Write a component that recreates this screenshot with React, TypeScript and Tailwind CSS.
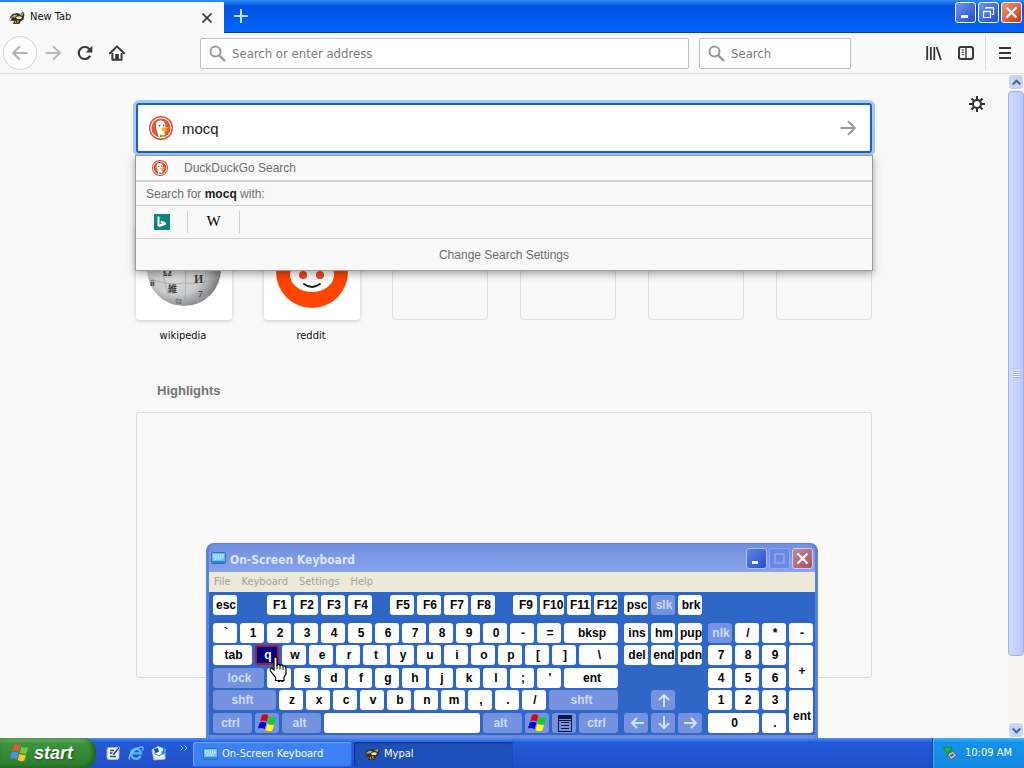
import { useState } from 'react';
import type { ReactNode } from 'react';
import clsx from 'clsx';

const UI = "font-['DejaVu_Sans_Condensed','Noto_Sans',sans-serif]";

/* ---------- Icons ---------- */

function MypalIcon() {
  return (
    <svg width="16" height="16" viewBox="0 0 16 16" className="shrink-0">
      <path d="M0.5 7.5 L3.5 4 L8 3 L11.5 4 L14 1.5 L15.5 4.5 L14.5 9.5 L11.5 11.5 L10.5 14 L4 14 L5 11 L1 10.5 L3 8.8Z" fill="#3a2f20" />
      <path d="M1.5 7.5 L5 4.8 L8.5 5 L6 7.5Z M10.5 4.4 L14.4 2.8 L13.5 6Z" fill="#b5a878" />
      <path d="M7 7.2 Q10 5.2 13 7 L12 9 L8 9Z" fill="#f1e9cf" />
      <path d="M5.5 11 L9.5 10 L9.5 13 L6 13.2Z" fill="#b8924a" />
      <path d="M7 10 L8 13" stroke="#2b2218" />
    </svg>
  );
}

function WindowsFlag({ size = 20, bright = false }: { size?: number; bright?: boolean }) {
  return (
    <svg width={size} height={size} viewBox="0 0 20 20" className="shrink-0">
      <g transform="rotate(8 10 10)">
        <path d="M3 3 Q6 0.8 9.4 2.6 L8.6 9 Q5.4 7.4 2 9.3Z" fill={bright ? '#e00000' : '#e8582c'} />
        <path d="M10.4 3.3 Q13.6 5 17.4 3.2 L16.4 9.6 Q13 11.2 9.7 9.6Z" fill={bright ? '#00d818' : '#7fc241'} />
        <path d="M1.8 10.6 Q5 8.6 8.4 10.2 L7.5 16.6 Q4.4 15.2 0.8 17Z" fill={bright ? '#0000d8' : '#4c8ff0'} />
        <path d="M9.5 10.9 Q12.6 12.4 16.2 10.8 L15.3 17.2 Q12 18.8 8.6 17.2Z" fill={bright ? '#ffff00' : '#fbc72c'} />
      </g>
    </svg>
  );
}

function DuckIcon({ size }: { size: number }) {
  return (
    <svg width={size} height={size} viewBox="0 0 24 24" className="shrink-0">
      <circle cx="12" cy="12" r="12" fill="#d9492f" />
      <circle cx="12" cy="12" r="10.6" fill="#fff" />
      <circle cx="12" cy="12" r="9.6" fill="#de5833" />
      <path d="M9.8 21.3 C9 17 7 13.5 6.8 9.5 C6.8 6.5 8.4 5 10.6 4.6 C14.6 4.3 16.6 6.8 16.4 10.5 L15.4 15 L16 21 Q13 22 9.8 21.3Z" fill="#fff" />
      <path d="M12.5 12 Q16 10.2 20 11.6 Q18 13 15 13.2 Q18 14 19 14.4 Q15.5 16.4 12.7 14.8Z" fill="#f9b51b" />
      <path d="M11 18.5 L14 19.4 L17 18 L17 21 L14 20.6 L11 21.4Z" fill="#5aad45" />
      <circle cx="10.4" cy="9.6" r="0.9" fill="#2d4f8e" />
      <circle cx="14.7" cy="9.2" r="0.8" fill="#2d4f8e" />
    </svg>
  );
}

function Magnifier() {
  return (
    <svg width="17" height="17" viewBox="0 0 17 17" fill="none" stroke="#98989a" strokeWidth="2" className="shrink-0">
      <circle cx="6.5" cy="6.5" r="5" />
      <path d="M10.3 10.3 L16 16" strokeWidth="2.4" />
    </svg>
  );
}

function ArrowIcon({ flip = false, className }: { flip?: boolean; className?: string }) {
  return (
    <svg width="16" height="16" viewBox="0 0 16 16" fill="none" stroke="currentColor" strokeWidth="2" className={className}>
      {flip ? <path d="M15.5 8 H1.5 M8 1.2 L1.2 8 L8 14.8" /> : <path d="M0.5 8 H14.5 M8 1.2 L14.8 8 L8 14.8" />}
    </svg>
  );
}

function ReloadIcon() {
  return (
    <svg width="16" height="16" viewBox="0 0 16 16">
      <path d="M13.1 10.8 A6 6 0 1 1 12.6 4.4" fill="none" stroke="#38383a" strokeWidth="2.2" />
      <path d="M15.4 0.8 V7.4 H8.8Z" fill="#38383a" />
    </svg>
  );
}

function HomeIcon() {
  return (
    <svg width="16" height="16" viewBox="0 0 16 16">
      <path d="M1 8.3 L8 1.4 L15 8.3" fill="none" stroke="#38383a" strokeWidth="2" strokeLinecap="round" strokeLinejoin="round" />
      <path d="M3.4 8 V14.8 H12.6 V8" fill="none" stroke="#38383a" strokeWidth="2" strokeLinejoin="round" />
      <path d="M6.2 15 V9 H9.8 V15Z" fill="#38383a" />
    </svg>
  );
}

function GearIcon() {
  return (
    <svg width="16" height="16" viewBox="0 0 16 16" fill="none" stroke="#2f2f31" strokeWidth="2">
      <circle cx="8" cy="8" r="4" />
      <path d="M8 0 V4 M8 12 V16 M0 8 H4 M12 8 H16 M2.5 2.5 L5.2 5.2 M10.8 10.8 L13.5 13.5 M13.5 2.5 L10.8 5.2 M5.2 10.8 L2.5 13.5" />
    </svg>
  );
}

function KeyboardIcon() {
  return (
    <svg width="15" height="12" viewBox="0 0 15 12" className="shrink-0">
      <rect x="0.5" y="0.5" width="14" height="11" rx="1" fill="#2f88cc" stroke="#2a6fb8" />
      <rect x="1" y="1" width="13" height="8" fill="#6cc0ee" />
      <path d="M2 3 H13 M2 5 H13 M3.5 7 H11.5" stroke="#fff" strokeDasharray="1.5 0.8" />
    </svg>
  );
}

function WikipediaGlobe() {
  return (
    <svg viewBox="0 0 96 96" className="size-full">
      <defs>
        <radialGradient id="globe" cx="40%" cy="45%" r="62%">
          <stop offset="0" stopColor="#e6e6e6" />
          <stop offset="0.65" stopColor="#c9cacb" />
          <stop offset="1" stopColor="#77797b" />
        </radialGradient>
      </defs>
      <circle cx="48" cy="45" r="37" fill="url(#globe)" />
      <path
        d="M13 54 Q30 62 48 59 Q66 61 83 53 M25 74 Q40 79 55 76 Q65 76 72 71 M27 45 Q28 62 36 80 M49 45 Q51 60 48 82 M70 45 Q70 62 61 79"
        fill="none"
        stroke="#a4a6a8"
        strokeWidth="0.8"
      />
      <g fill="#3c3c3c" fontFamily="Liberation Serif, serif" fontWeight="bold">
        <text x="27" y="52" fontSize="11">Ω</text>
        <text x="58" y="59" fontSize="12">И</text>
        <text x="32" y="68" fontSize="9" fontFamily="Noto Sans CJK JP, sans-serif">維</text>
        <text x="62" y="73" fontSize="9">7</text>
        <text x="14" y="62" fontSize="8">й</text>
      </g>
      <path d="M39 76 H46 M40 79 H46 M41 74 V79 M44 75 V80" stroke="#6a6a6a" strokeWidth="0.8" />
    </svg>
  );
}

function RedditFace() {
  return (
    <svg viewBox="0 0 96 96" className="size-full">
      <circle cx="48" cy="48" r="36" fill="#ff4500" />
      <circle cx="26" cy="41" r="6" fill="#fff" />
      <circle cx="70" cy="41" r="6" fill="#fff" />
      <ellipse cx="48" cy="51" rx="22" ry="17" fill="#fff" />
      <circle cx="39" cy="51" r="4" fill="#f0442a" />
      <circle cx="56" cy="51" r="4" fill="#f0442a" />
      <path d="M40 60 Q48 66 56 60" fill="none" stroke="#161616" strokeWidth="1.8" strokeLinecap="round" />
    </svg>
  );
}

/* ---------- Browser ---------- */

function CaptionButton({ label, className, children }: { label: string; className: string; children: ReactNode }) {
  return (
    <button aria-label={label} className={clsx('flex size-[21px] items-center justify-center rounded-[3px] border', className)}>
      <svg width="17" height="17" viewBox="0 0 17 17" fill="none" stroke="#fff" strokeWidth="2">{children}</svg>
    </button>
  );
}

const BLUE_CAPTION = 'border-white bg-linear-to-br from-[#6f93f0] to-[#1f4ccc]';
const RED_CAPTION = 'border-white bg-linear-to-br from-[#f0957a] to-[#c8300c]';

function TitleBar() {
  return (
    <header className="flex h-[33px] items-start bg-linear-to-b from-[#2f8df8] via-[#0052e2] via-20% to-[#0066ff] shadow-[inset_0_-1px_0_#003cb4]">
      <div className="mt-0.5 flex h-[31px] w-56 items-center bg-[#f9f9fa] pr-[9px] pl-[9px]">
        <MypalIcon />
        <span className="ml-[5px] flex-1 text-[11px] text-[#0c0c0d]">New Tab</span>
        <button aria-label="Close tab" className="flex size-4 items-center justify-center">
          <svg width="10" height="10" viewBox="0 0 10 10" stroke="#38383a" strokeWidth="1.6"><path d="M0.5 0.5 L9.5 9.5 M9.5 0.5 L0.5 9.5" /></svg>
        </button>
      </div>
      <button aria-label="New tab" className="flex h-8 w-[34px] items-center justify-center">
        <svg width="14" height="14" viewBox="0 0 14 14" stroke="#bfe3ff" strokeWidth="2"><path d="M7 0 V14 M0 7 H14" /></svg>
      </button>
      <div className="mt-0.5 mr-0.5 ml-auto flex gap-0.5">
        <CaptionButton label="Minimize" className={BLUE_CAPTION}>
          <path d="M4 12.5 H11" strokeWidth="3" />
        </CaptionButton>
        <CaptionButton label="Restore" className={BLUE_CAPTION}>
          <path d="M3.5 7.5 H10.5 V13.5 H3.5Z M6 5 V3.5 H13.5 V10.5 H12" strokeWidth="1.2" />
          <path d="M3 7.5 H11 M6 3.7 H14" strokeWidth="1.4" />
        </CaptionButton>
        <CaptionButton label="Close" className={RED_CAPTION}>
          <path d="M3.5 3.5 L13.5 13.5 M13.5 3.5 L3.5 13.5" strokeWidth="2.2" />
        </CaptionButton>
      </div>
    </header>
  );
}

function NavBar() {
  return (
    <nav className="flex h-[41px] items-center border-b border-[#dedee0] bg-[#f9f9fa] pl-[3px] text-[13px]">
      <button aria-label="Back" className="flex size-[34px] items-center justify-center rounded-full border border-[#d2d2d4] bg-white/60 text-[#b2b2b4]">
        <ArrowIcon flip />
      </button>
      <button aria-label="Forward" className="flex size-8 items-center justify-center text-[#b8b8ba]"><ArrowIcon /></button>
      <button aria-label="Reload" className="flex size-8 items-center justify-center"><ReloadIcon /></button>
      <button aria-label="Home" className="flex size-8 items-center justify-center"><HomeIcon /></button>
      <label className="ml-[67px] flex h-[31px] flex-1 items-center gap-1.5 rounded-xs border border-[#bdbdbf] bg-white px-2">
        <Magnifier />
        <input aria-label="Address" placeholder="Search or enter address" className="min-w-0 flex-1 pt-0.5 outline-none placeholder:text-[#7b7b7b]" />
      </label>
      <label className="ml-2.5 flex h-[31px] w-[152px] items-center gap-1.5 rounded-xs border border-[#bdbdbf] bg-white px-2">
        <Magnifier />
        <input aria-label="Search bar" placeholder="Search" className="min-w-0 flex-1 pt-0.5 outline-none placeholder:text-[#7b7b7b]" />
      </label>
      <button aria-label="Library" className="ml-[67px] flex size-8 items-center justify-center">
        <svg width="16" height="16" viewBox="0 0 16 16" stroke="#38383a" strokeWidth="1.8"><path d="M1.2 1 V15 M4.8 2 V15 M8.3 2 V15 M10.6 2 L15 15" /></svg>
      </button>
      <button aria-label="Sidebars" className="flex size-8 items-center justify-center">
        <svg width="16" height="14" viewBox="0 0 16 14" fill="none" stroke="#38383a">
          <rect x="1" y="1" width="14" height="12" rx="2" strokeWidth="2" />
          <path d="M8 1 V13" strokeWidth="1.4" />
          <path d="M3.5 4 H6.2 M3.5 6.3 H6.2 M4 8.6 H6.2" />
        </svg>
      </button>
      <div className="ml-[3px] h-[34px] w-px bg-[#dcdcde]" />
      <button aria-label="Menu" className="flex h-8 w-[38px] items-center justify-center">
        <svg width="12" height="12" viewBox="0 0 12 12" stroke="#38383a" strokeWidth="2"><path d="M0 1 H12 M0 6 H12 M0 11 H12" /></svg>
      </button>
    </nav>
  );
}

function SearchPanel() {
  const [query, setQuery] = useState('mocq');

  return (
    <div className="relative z-10 font-['Liberation_Sans',Arial,sans-serif]">
      <div className="flex h-[50px] items-center rounded-[3px] border-2 border-[#1c62c4] bg-white pr-3.5 pl-[11px] shadow-[0_0_0_3px_#a6cbfb]">
        <DuckIcon size={24} />
        <input
          aria-label="Search the Web"
          value={query}
          onChange={(e) => setQuery(e.target.value)}
          className="ml-[9px] min-w-0 flex-1 pt-0.5 text-[15px] text-[#1a1a1a] outline-none"
        />
        <button aria-label="Submit" className="text-[#98989a]"><ArrowIcon /></button>
      </div>
      <div className="absolute top-[52px] -right-px -left-px border border-[#9a9a9a] bg-[#f9f9f9] text-xs text-[#6c6c6c] shadow-[0_3px_8px_rgba(0,0,0,0.35)]">
        <div className="flex h-[26px] items-center border-b-2 border-[#cfcfcf] pl-4">
          <DuckIcon size={16} />
          <span className="ml-4">DuckDuckGo Search</span>
        </div>
        <div className="h-6 border-b border-[#cfcfcf] pl-2.5 leading-6">
          Search for <b className="text-[#1a1a1a]">{query}</b> with:
        </div>
        <div className="flex h-[33px] items-center border-b border-[#cfcfcf]">
          <button aria-label="Bing" className="flex h-[22px] w-[52px] items-center justify-center border-r border-[#cfcfcf]">
            <svg width="16" height="16" viewBox="0 0 16 16">
              <rect width="16" height="16" fill="#0a8577" />
              <path d="M4.5 2.5 V12" stroke="#fff" strokeWidth="2" />
              <path d="M4.5 12.2 L11 9.6 L6.8 7.6" fill="none" stroke="#fff" strokeWidth="2.4" strokeLinejoin="round" />
            </svg>
          </button>
          <button aria-label="Wikipedia" className="flex h-[22px] w-[52px] items-center justify-center border-r border-[#cfcfcf] font-['Liberation_Serif',serif] text-[15px] text-black">W</button>
        </div>
        <button className="block h-[31px] w-full">Change Search Settings</button>
      </div>
    </div>
  );
}

function TopSites() {
  const sites = [
    { name: 'wikipedia', art: <WikipediaGlobe /> },
    { name: 'reddit', art: <RedditFace /> },
  ];

  return (
    <ul className="mt-[71px] flex justify-between text-[11px] text-[#0c0c0d]">
      {sites.map((site) => (
        <li key={site.name}>
          <a href="#" className="block w-24 text-center">
            <span className="block size-24 rounded bg-white shadow-[0_1px_4px_rgba(12,12,13,0.2)]">{site.art}</span>
            <span className="mt-2 block pr-0.5 leading-4">{site.name}</span>
          </a>
        </li>
      ))}
      {[0, 1, 2, 3].map((slot) => (
        <li key={slot} className="size-24 rounded border border-[#dfdfe0]" />
      ))}
    </ul>
  );
}

function ScrollBar() {
  const button = 'flex h-4 w-full items-center justify-center rounded-sm border border-white bg-[#c6d3fb]';
  return (
    <div className="flex w-4 shrink-0 flex-col bg-[#f5f5ee]">
      <button aria-label="Scroll up" className={button}>
        <svg width="9" height="7" viewBox="0 0 9 7" fill="none" stroke="#4d6185" strokeWidth="2"><path d="M0.7 5.5 L4.5 1.7 L8.3 5.5" /></svg>
      </button>
      <div className="flex-1 pt-px">
        <div className="flex h-[89.5%] flex-col items-center justify-center gap-px rounded-sm border border-[#9db2ee] bg-linear-to-r from-[#d0dafe] to-[#b9c9fa]">
          {[0, 1, 2, 3].map((n) => (
            <span key={n} className="h-px w-[7px] bg-[#eef4fe] shadow-[0_1px_0_#8cb0f8]" />
          ))}
        </div>
      </div>
      <button aria-label="Scroll down" className={button}>
        <svg width="9" height="7" viewBox="0 0 9 7" fill="none" stroke="#4d6185" strokeWidth="2"><path d="M0.7 1.5 L4.5 5.3 L8.3 1.5" /></svg>
      </button>
    </div>
  );
}

function Browser() {
  return (
    <div className="flex min-h-0 flex-1 flex-col">
      <TitleBar />
      <NavBar />
      <div className="flex min-h-0 flex-1 bg-[#f9f9fa]">
        <main className="relative flex-1 overflow-hidden px-4 pt-[29px]">
          <button aria-label="Customize page" className="absolute top-[22px] right-[23px]"><GearIcon /></button>
          <div className="mx-auto max-w-[736px]">
            <SearchPanel />
            <TopSites />
            <h2 className="mt-[39px] ml-[21px] font-['Liberation_Sans',Arial,sans-serif] text-[13px] leading-4 font-bold text-[#737373]">Highlights</h2>
            <div className="mt-[13px] h-[266px] rounded-[3px] border border-[#dadadc]" />
          </div>
        </main>
        <ScrollBar />
      </div>
    </div>
  );
}

/* ---------- On-screen keyboard ---------- */

type KeyDef = { k: ReactNode; name?: string; w?: string; soft?: boolean; hot?: boolean };

function Key({ k, name, w = 'w-6', soft, hot, className }: KeyDef & { className?: string }) {
  return (
    <button
      aria-label={name}
      className={clsx(
        'flex shrink-0 items-center justify-center overflow-hidden rounded-[3px] pl-0.5 whitespace-nowrap',
        className ?? 'h-5',
        w,
        soft && 'bg-[#7592e0] text-[#cbdcff]',
        hot && 'border-2 border-[#b0163c] bg-[#000080] text-white',
        !soft && !hot && 'bg-white text-black',
      )}
    >
      {k}
    </button>
  );
}

const plain = (keys: string): KeyDef[] => keys.split(' ').map((k) => ({ k }));

function KeyArrow({ d }: { d: string }) {
  return (
    <svg width="14" height="14" viewBox="0 0 14 14" fill="none" stroke="#cbe4ff" strokeWidth="2"><path d={d} /></svg>
  );
}

const MENU_KEY = (
  <svg width="14" height="17" viewBox="0 0 14 17" fill="none" stroke="#0b1440">
    <rect x="0.5" y="0.5" width="13" height="16" />
    <path d="M1 2.5 H13" strokeWidth="3" />
    <path d="M3 7.5 H11 M3 10.5 H11 M3 13.5 H11 M1 5.5 H13" />
  </svg>
);

const MAIN_ROWS: KeyDef[][] = [
  [...plain('` 1 2 3 4 5 6 7 8 9 0 - ='), { k: 'bksp', w: 'w-[54px]' }],
  [{ k: 'tab', w: 'w-[39px]' }, { k: 'q', hot: true }, ...plain('w e r t y u i o p [ ]'), { k: '\\', w: 'w-[39px]' }],
  [{ k: 'lock', w: 'w-[51px]', soft: true }, ...plain("a s d f g h j k l ; '"), { k: 'ent', w: 'w-[54px]' }],
  [{ k: 'shft', w: 'w-[63px] pr-1.5', soft: true }, ...plain('z x c v b n m , . /'), { k: 'shft', w: 'w-[69px] pr-1.5', soft: true }],
  [
    { k: 'ctrl', w: 'w-[39px] pr-1.5', soft: true },
    { k: <WindowsFlag bright />, name: 'Windows', soft: true },
    { k: 'alt', w: 'w-[39px] pr-1.5', soft: true },
    { k: '', name: 'Space', w: 'w-[156px]' },
    { k: 'alt', w: 'w-[39px] pr-1.5', soft: true },
    { k: <WindowsFlag bright />, name: 'Windows', soft: true },
    { k: MENU_KEY, name: 'Menu key', soft: true },
    { k: 'ctrl', w: 'w-[39px] pr-1.5', soft: true },
  ],
];

const ROW_GRID = 'grid grid-rows-[20px_21px_20px_21px_20px] gap-y-0.5';

function Keys({ keys }: { keys: KeyDef[] }) {
  return <div className="flex gap-[3px]">{keys.map((key, i) => <Key key={i} {...key} />)}</div>;
}

function OnScreenKeyboard() {
  return (
    <section
      aria-label="On-Screen Keyboard"
      className="absolute bottom-0 left-[206px] w-[612px] rounded-t-lg border-x-[3px] border-t border-[#5f7fdc] bg-[#6f8ae0]"
    >
      <div className="flex h-7 items-center rounded-t-md bg-linear-to-b from-[#7090e0] via-[#7d99e2] to-[#86a2ee] pr-0.5 pl-0.5">
        <KeyboardIcon />
        <h1 className="ml-1 flex-1 pt-1 text-xs font-bold text-[#dbe7ff]">On-Screen Keyboard</h1>
        <div className="flex gap-0.5">
          <CaptionButton label="Minimize keyboard" className="border-[#a9c0f8] bg-linear-to-br from-[#5f83e6] to-[#2550c8]">
            <path d="M4 12.5 H10" strokeWidth="3" />
          </CaptionButton>
          <CaptionButton label="Maximize keyboard" className="border-[#8fa9ee] bg-[#6a89e2]">
            <path d="M4 4 H13 V13 H4Z" stroke="#87a2ee" />
          </CaptionButton>
          <CaptionButton label="Close keyboard" className="border-[#d4cdec] bg-linear-to-br from-[#c08a9c] to-[#a85064]">
            <path d="M3.5 3.5 L13.5 13.5 M13.5 3.5 L3.5 13.5" strokeWidth="2.2" />
          </CaptionButton>
        </div>
      </div>
      <div className="flex h-5 items-center gap-[11px] bg-[#ece9d8] pl-[5px] text-[11px] text-[#a5a293]">
        {['File', 'Keyboard', 'Settings', 'Help'].map((item) => (
          <button key={item}>{item}</button>
        ))}
      </div>
      <div className="bg-[#2f67c6] pt-[3px] pb-0.5 pl-1 font-['Liberation_Sans',Arial,sans-serif] text-xs leading-5 font-bold">
        <div className="flex">
          <Keys keys={[{ k: 'esc' }]} />
          <div className="ml-[30px]"><Keys keys={plain('F1 F2 F3 F4')} /></div>
          <div className="ml-[18px]"><Keys keys={plain('F5 F6 F7 F8')} /></div>
          <div className="ml-[18px]"><Keys keys={plain('F9 F10 F11 F12')} /></div>
          <div className="ml-1.5"><Keys keys={[{ k: 'psc' }, { k: 'slk', soft: true }, { k: 'brk' }]} /></div>
        </div>
        <div className="mt-2 flex gap-1.5">
          <div className={ROW_GRID}>
            {MAIN_ROWS.map((row, i) => <Keys key={i} keys={row} />)}
          </div>
          <div className={clsx(ROW_GRID, 'grid-cols-[repeat(3,24px)] gap-x-[3px]')}>
            {plain('ins hm pup del end pdn').map((key, i) => <Key key={i} {...key} />)}
            <Key k={<KeyArrow d="M7 14 V2 M2 7 L7 2 L12 7" />} name="Up" soft className="col-start-2 row-start-4 h-5" />
            <Key k={<KeyArrow d="M14 7 H2 M7 2 L2 7 L7 12" />} name="Left" soft className="col-start-1 row-start-5 h-5" />
            <Key k={<KeyArrow d="M7 0 V12 M2 7 L7 12 L12 7" />} name="Down" soft className="row-start-5 h-5" />
            <Key k={<KeyArrow d="M0 7 H12 M7 2 L12 7 L7 12" />} name="Right" soft className="row-start-5 h-5" />
          </div>
          <div className={clsx(ROW_GRID, 'grid-cols-[repeat(4,24px)] gap-x-[3px]')}>
            <Key k="nlk" soft />
            {plain('/ * - 7 8 9').map((key, i) => <Key key={i} {...key} />)}
            <Key k="+" className="row-span-2 h-[43px] pt-2" />
            {plain('4 5 6 1 2 3').map((key, i) => <Key key={i} {...key} />)}
            <Key k="ent" className="row-span-2 h-[43px] pt-2" />
            <Key k="0" w="w-[51px]" className="col-span-2 h-5" />
            <Key k="." />
          </div>
        </div>
      </div>
      <div className="h-[3px] bg-[#7189de]" />
      {/* Hand pointer over the q key */}
      <svg width="20" height="27" viewBox="0 0 20 27" className="absolute top-[112px] left-[60px]">
        <path
          d="M5 1.8 Q6.5 0 8 1.8 V9 Q9.6 7.6 11 9.4 Q12.8 8.2 14 10.2 Q16.4 9.4 17 12 V18 L15 21 V24.5 H6.5 V21.5 L1.5 15 Q0.4 12.4 2.6 12 L5 14Z"
          fill="#fff"
          stroke="#000"
          strokeWidth="1.2"
        />
        <path d="M8 9 V13 M11 10 V13.5 M14 11 V14" stroke="#000" />
      </svg>
    </section>
  );
}

/* ---------- Taskbar ---------- */

function TaskButton({ icon, label, active }: { icon: ReactNode; label: string; active?: boolean }) {
  return (
    <button
      className={clsx(
        'flex h-[25px] w-[159px] items-center gap-1 rounded-[3px] pl-2.5 text-[11px] text-white',
        active
          ? 'bg-[#1d4fb8] shadow-[inset_1px_1px_2px_#0c2f80]'
          : 'bg-[#3c81f3] shadow-[inset_1px_1px_1px_#6fa6ff,inset_-1px_-1px_1px_#2a62d0]',
      )}
    >
      {icon}
      {label}
    </button>
  );
}

function Taskbar() {
  return (
    <footer className="flex h-[30px] shrink-0 items-stretch bg-linear-to-b from-[#4a90f6] via-[#2459d8] via-15% to-[#1f4fc4]">
      <button className="flex w-24 items-center gap-1 rounded-r-xl bg-linear-to-b from-[#6cb56a] via-[#3c933b] via-20% to-[#2f7d2e] pl-2.5 font-['Liberation_Sans',Arial,sans-serif] text-lg font-bold text-white italic shadow-[inset_-3px_-1px_5px_#1f5f20] [text-shadow:1px_1px_2px_#1c4a1c]">
        <WindowsFlag />
        start
      </button>
      <div className="flex items-center gap-[7px] pl-[9px]">
        <button aria-label="Show desktop">
          <svg width="16" height="16" viewBox="0 0 16 16">
            <rect x="2" y="2.5" width="12" height="12" rx="2" fill="#eef4fb" stroke="#9cb7dc" />
            <path d="M5 5.5 H9 M5 8 H7.5 M5 11.5 H11" stroke="#27548f" strokeWidth="1.3" />
            <path d="M7 10 L13.5 1.5 L15 3 L9 10.5Z" fill="#1d3f74" stroke="#fff" strokeWidth="0.6" />
          </svg>
        </button>
        <button aria-label="Internet Explorer">
          <svg width="16" height="16" viewBox="0 0 16 16" fill="none">
            <path d="M12.6 10.8 A5 5 0 1 1 13 8.4 H4.5" stroke="#5ab4f4" strokeWidth="2.4" />
            <path d="M1.4 14.6 Q-0.4 11 7 5 Q13.5 0.6 15 2.4 Q15.6 3.6 14.2 5.6" stroke="#8cc8f4" strokeWidth="1.2" />
          </svg>
        </button>
        <button aria-label="Outlook Express">
          <svg width="16" height="16" viewBox="0 0 16 16">
            <path d="M1 5 L7 1.5 L14 4 V14 L3 15Z" fill="#eef6ff" stroke="#a9c8ea" />
            <path d="M3 8 L8 11 L13 7" fill="none" stroke="#3f80c8" />
            <path d="M11 1 Q15 3 13.5 7 L15 7.5 L11.5 10 L10 6 L11.6 6.4 Q12.5 4 11 1Z" fill="#2f7fd4" />
            <path d="M3 4 L7 3 L8 7 L4 8Z" fill="#1c4f96" />
          </svg>
        </button>
      </div>
      <button aria-label="More quick launch items" className="ml-[13px] h-5">
        <svg width="8" height="6" viewBox="0 0 8 6" fill="none" stroke="#a5ccff"><path d="M0.5 0.5 L3 3 L0.5 5.5 M4.5 0.5 L7 3 L4.5 5.5" /></svg>
      </button>
      <div className="ml-[5px] flex items-center gap-0.5 pt-0.5">
        <TaskButton icon={<KeyboardIcon />} label="On-Screen Keyboard" />
        <TaskButton icon={<MypalIcon />} label="Mypal" active />
      </div>
      <div className="ml-auto flex items-center gap-[7px] border-l border-[#0c3f9c] bg-linear-to-b from-[#3fb6f8] via-[#1592e8] via-15% to-[#128ae0] pr-3 pl-2.5 text-[11px] text-white shadow-[inset_1px_0_0_#40b8ff]">
        <svg width="15" height="15" viewBox="0 0 15 15">
          <path d="M4 8 L10 5.5 L14 9.5 L8 13.5Z" fill="#c9d2d6" stroke="#4c5a62" />
          <path d="M6.5 9 L10 7.5 L11.5 9.2 L8 11Z" fill="#59676f" />
          <path d="M0.5 1.5 L8.5 1 L8 5 L6.4 4.4 L5 9.6 L2.6 5Z" fill="#30b430" stroke="#137016" strokeWidth="0.6" />
        </svg>
        <time>10:09 AM</time>
      </div>
    </footer>
  );
}

export default function App() {
  return (
    <div className={clsx('flex h-screen flex-col overflow-hidden', UI)}>
      <div className="relative flex min-h-0 flex-1 flex-col overflow-hidden">
        <Browser />
        <OnScreenKeyboard />
      </div>
      <Taskbar />
    </div>
  );
}
